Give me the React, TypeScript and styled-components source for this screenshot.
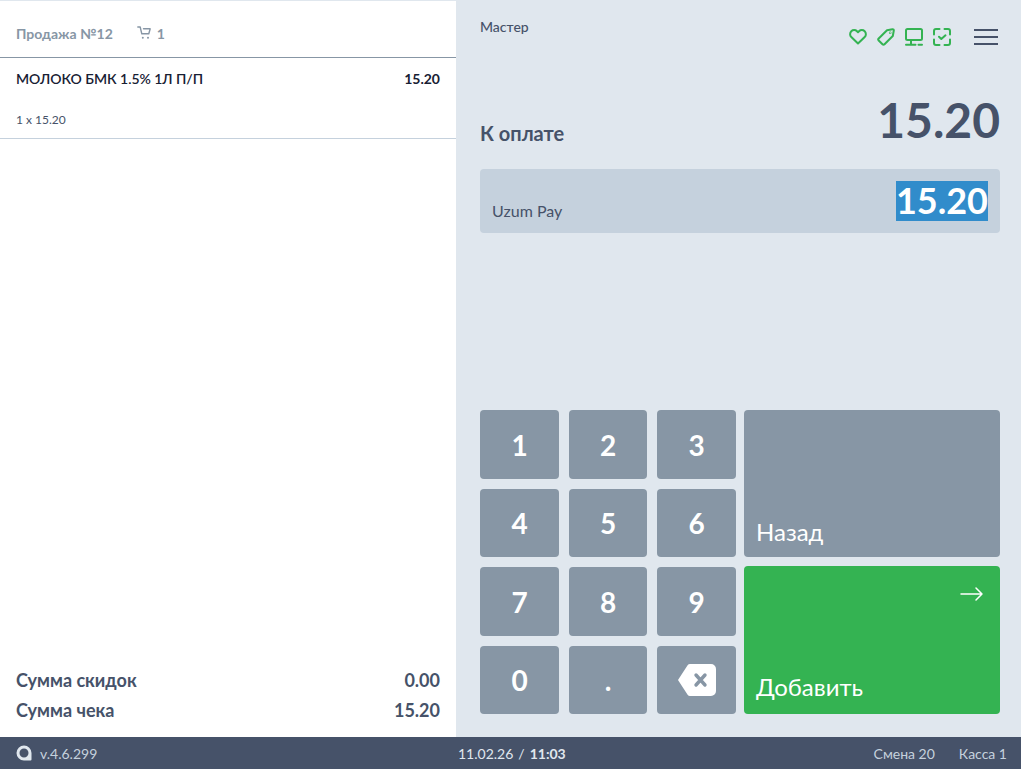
import React from "react";
import styled, { createGlobalStyle } from "styled-components";

const Global = createGlobalStyle`
  html, body { margin: 0; padding: 0; height: 100%; background: #fff; }
  body { font-family: Lato, "Noto Sans", sans-serif; overflow: hidden; }
  #root { height: 100%; }
  * { box-sizing: border-box; }
`;

const Screen = styled.div`
  width: 1021px; height: 769px; display: grid;
  grid-template-rows: 737px 32px; grid-template-columns: 456px 565px;
`;
const Receipt = styled.section`
  display: flex; flex-direction: column; background: #fff; border-top: 1px solid #e0e7ee;
`;
const SaleHeader = styled.header`
  height: 57px; display: flex; align-items: center; padding: 8px 16px 0; border-bottom: 1px solid #8796a5;
  color: #8796a5; font-size: 14px; font-weight: 700;
`;
const CartCount = styled.span`
  display: flex; align-items: center; gap: 5px; margin-left: 24px;
`;
const Line = styled.article`
  height: 81px; padding: 12px 16px 0; border-bottom: 1px solid #c5d1dd; color: #172033;
`;
const LineTop = styled.div`
  display: flex; justify-content: space-between; font-size: 14px; font-weight: 700; line-height: 17px;
`;
const LineName = styled.span`
  font-weight: 600; letter-spacing: -0.04px;
`;
const LineQty = styled.div`
  margin-top: 25px; font-size: 12px; line-height: 15px; color: #465269;
`;
const Totals = styled.div`
  margin-top: auto; padding: 0 16px 16px; display: flex; flex-direction: column; gap: 8px;
`;
const TotalRow = styled.div`
  display: flex; justify-content: space-between; font-size: 18px; line-height: 22px; font-weight: 700; color: #465269;
`;
const Payment = styled.section`
  background: #e0e7ee; padding: 0 21px 23px 24px; display: flex; flex-direction: column;
`;
const TopBar = styled.div`
  height: 58px; display: flex; justify-content: space-between; align-items: flex-start; color: #465269;
`;
const Master = styled.div`
  margin-top: 19px; font-size: 14px; line-height: 16px; font-weight: 500;
`;
const Icons = styled.div`
  margin-top: 28px; display: flex; align-items: center; color: #34b352;
`;
const IconSlot = styled.span`
  display: flex; width: 28px; justify-content: center;
`;
const Menu = styled.span`
  margin: 0 2px 0 18px; display: flex; flex-direction: column; gap: 5px; width: 24px;
  i { display: block; height: 2px; background: #465269; }
`;
const DueRow = styled.div`
  height: 111px; padding-bottom: 24px; display: flex; justify-content: space-between; align-items: flex-end; color: #465269;
`;
const DueLabel = styled.span`
  font-size: 20px; line-height: 24px; font-weight: 700;
`;
const DueValue = styled.span`
  font-size: 48px; line-height: 50px; font-weight: 700;
`;
const PayField = styled.div`
  height: 64px; background: #c5d1dd; border-radius: 4px; padding: 12px 12px 0;
  display: flex; justify-content: space-between; align-items: flex-start; color: #465269;
`;
const PayName = styled.span`
  margin-top: 20px; font-size: 16px; line-height: 20px;
`;
const PayAmount = styled.span`
  background: #318ccb; color: #fff; font-size: 36px; font-weight: 700; line-height: 39px; height: 40px;
`;
const Pad = styled.div`
  margin-top: auto; display: grid; grid-template-columns: 79px 78px 79px 256px;
  grid-template-rows: 69px 68px 69px 68px; column-gap: 10px; row-gap: 10px;
`;
const Key = styled.button`
  border: 0; padding: 0; border-radius: 4px; background: #8796a5; color: #fff; font-family: inherit;
  font-size: 28px; font-weight: 700; display: flex; align-items: center; justify-content: center;
`;
const Action = styled.button<{ $tone: string; $row: string; $top: number; $bottom: number }>`
  position: relative; grid-column: 4; grid-row: ${p => p.$row}; margin: ${p => p.$top}px 0 0 -2px; width: 256px;
  border: 0; border-radius: 4px; background: ${p => p.$tone}; color: #fff; font-family: inherit;
  font-size: 24px; line-height: 29px; padding: 0 12px ${p => p.$bottom}px; display: flex; align-items: flex-end;
`;
const Arrow = styled.span`
  position: absolute; top: 20px; right: 16px; display: flex;
`;
const Footer = styled.footer`
  grid-column: 1 / 3; background: #465269; color: #e0e7ee; font-size: 14px; display: grid;
  grid-template-columns: 442px 1fr auto; align-items: center; padding-left: 16px; padding-right: 14px;
`;
const Version = styled.span`
  display: flex; align-items: center; gap: 8px; color: #c5d1dd;
`;
const Clock = styled.span`
  display: flex; gap: 5px;
  b { font-weight: 700; }
`;
const Shift = styled.span`
  display: flex; gap: 24px; color: #c5d1dd;
`;

const Svg = ({ children }: { children: React.ReactNode }) => (
  <svg width={18} height={18} viewBox="0 0 18 18" fill="none" stroke="currentColor" strokeWidth="2" strokeLinecap="round" strokeLinejoin="round">{children}</svg>
);

const keys = ["1", "2", "3", "4", "5", "6", "7", "8", "9", "0", "."];

export default function App() {
  return (
    <Screen>
      <Global />
      <Receipt>
        <SaleHeader>
          Продажа №12
          <CartCount>
            <svg width="15" height="14" viewBox="0 0 15 14" fill="none" stroke="currentColor" strokeWidth="1.4" strokeLinejoin="round" strokeLinecap="round">
              <path d="M.8 1h2.400l1.600 6.800h7l1.400-5H6.500" />
              <circle cx="5.800" cy="11.800" r="1" fill="currentColor" stroke="none" />
              <circle cx="11" cy="11.800" r="1" fill="currentColor" stroke="none" />
            </svg>
            1
          </CartCount>
        </SaleHeader>
        <Line>
          <LineTop><LineName>МОЛОКО БМК 1.5% 1Л П/П</LineName><span>15.20</span></LineTop>
          <LineQty>1 x 15.20</LineQty>
        </Line>
        <Totals>
          <TotalRow><span>Сумма скидок</span><span>0.00</span></TotalRow>
          <TotalRow><span>Сумма чека</span><span>15.20</span></TotalRow>
        </Totals>
      </Receipt>
      <Payment>
        <TopBar>
          <Master>Мастер</Master>
          <Icons>
            <IconSlot><Svg><path d="M9 15.500 2.300 9a4 4 0 0 1 0-5.700 4 4 0 0 1 5.700 0l1 1 1-1A4 4 0 0 1 15.700 9Z" /></Svg></IconSlot>
            <IconSlot><Svg><path d="M1.700 10.500 10 2.200 15.500 1.200c.8-.1 1.400.5 1.300 1.300l-1 5.500-8.300 8.300c-.6.6-1.400.6-2 0l-3.800-3.800c-.6-.6-.6-1.400 0-2Z" /><circle cx="13.200" cy="4.800" r=".3" /></Svg></IconSlot>
            <IconSlot><Svg><rect x="1" y="1" width="16" height="11" rx="1.500" /><path d="M6 12v4.800M1 16.800h9.500M13.500 16.800H17" /></Svg></IconSlot>
            <IconSlot><Svg><path d="M6.500 1H3a2 2 0 0 0-2 2v3.500M11.500 1H15a2 2 0 0 1 2 2v3.500M17 11.500V15a2 2 0 0 1-2 2h-3.500M6.500 17H3a2 2 0 0 1-2-2v-3.500M6 8.800 8.300 11 12.500 7.300" /></Svg></IconSlot>
            <Menu><i /><i /><i /></Menu>
          </Icons>
        </TopBar>
        <DueRow><DueLabel>К оплате</DueLabel><DueValue>15.20</DueValue></DueRow>
        <PayField><PayName>Uzum Pay</PayName><PayAmount>15.20</PayAmount></PayField>
        <Pad>
          {keys.map(k => <Key key={k}>{k}</Key>)}
          <Key aria-label="Удалить">
            <svg width="38" height="32" viewBox="0 0 38 32">
              <path d="M12 0h21a5 5 0 0 1 5 5v22a5 5 0 0 1-5 5H12a3 3 0 0 1-2.400-1.200L0 16 9.600 1.200A3 3 0 0 1 12 0Z" fill="#fff" />
              <path d="M18 11l9 10M27 11l-9 10" stroke="#8796a5" strokeWidth="3.400" strokeLinecap="round" />
            </svg>
          </Key>
          <Action $tone="#8796a5" $row="1 / 3" $top={0} $bottom={11}>Назад</Action>
          <Action $tone="#34b352" $row="3 / 5" $top={-1} $bottom={13}>
            <Arrow>
              <svg width="24" height="16" viewBox="0 0 24 16" fill="none" stroke="#fff" strokeWidth="1.500" strokeLinecap="round" strokeLinejoin="round"><path d="M1 8h21M16 2l6 6-6 6" /></svg>
            </Arrow>
            Добавить
          </Action>
        </Pad>
      </Payment>
      <Footer>
        <Version>
          <svg width="16" height="16" viewBox="0 0 16 16"><path d="M8 .5a7.500 7.500 0 0 0 0 15h6.500a1 1 0 0 0 1-1V8A7.500 7.500 0 0 0 8 .5Zm0 3a4.500 4.500 0 1 1 0 9 4.500 4.500 0 0 1 0-9Z" fill="#e0e7ee" fillRule="evenodd" /></svg>
          v.4.6.299
        </Version>
        <Clock><span>11.02.26</span><span>/</span><b>11:03</b></Clock>
        <Shift><span>Смена 20</span><span>Касса 1</span></Shift>
      </Footer>
    </Screen>
  );
}
